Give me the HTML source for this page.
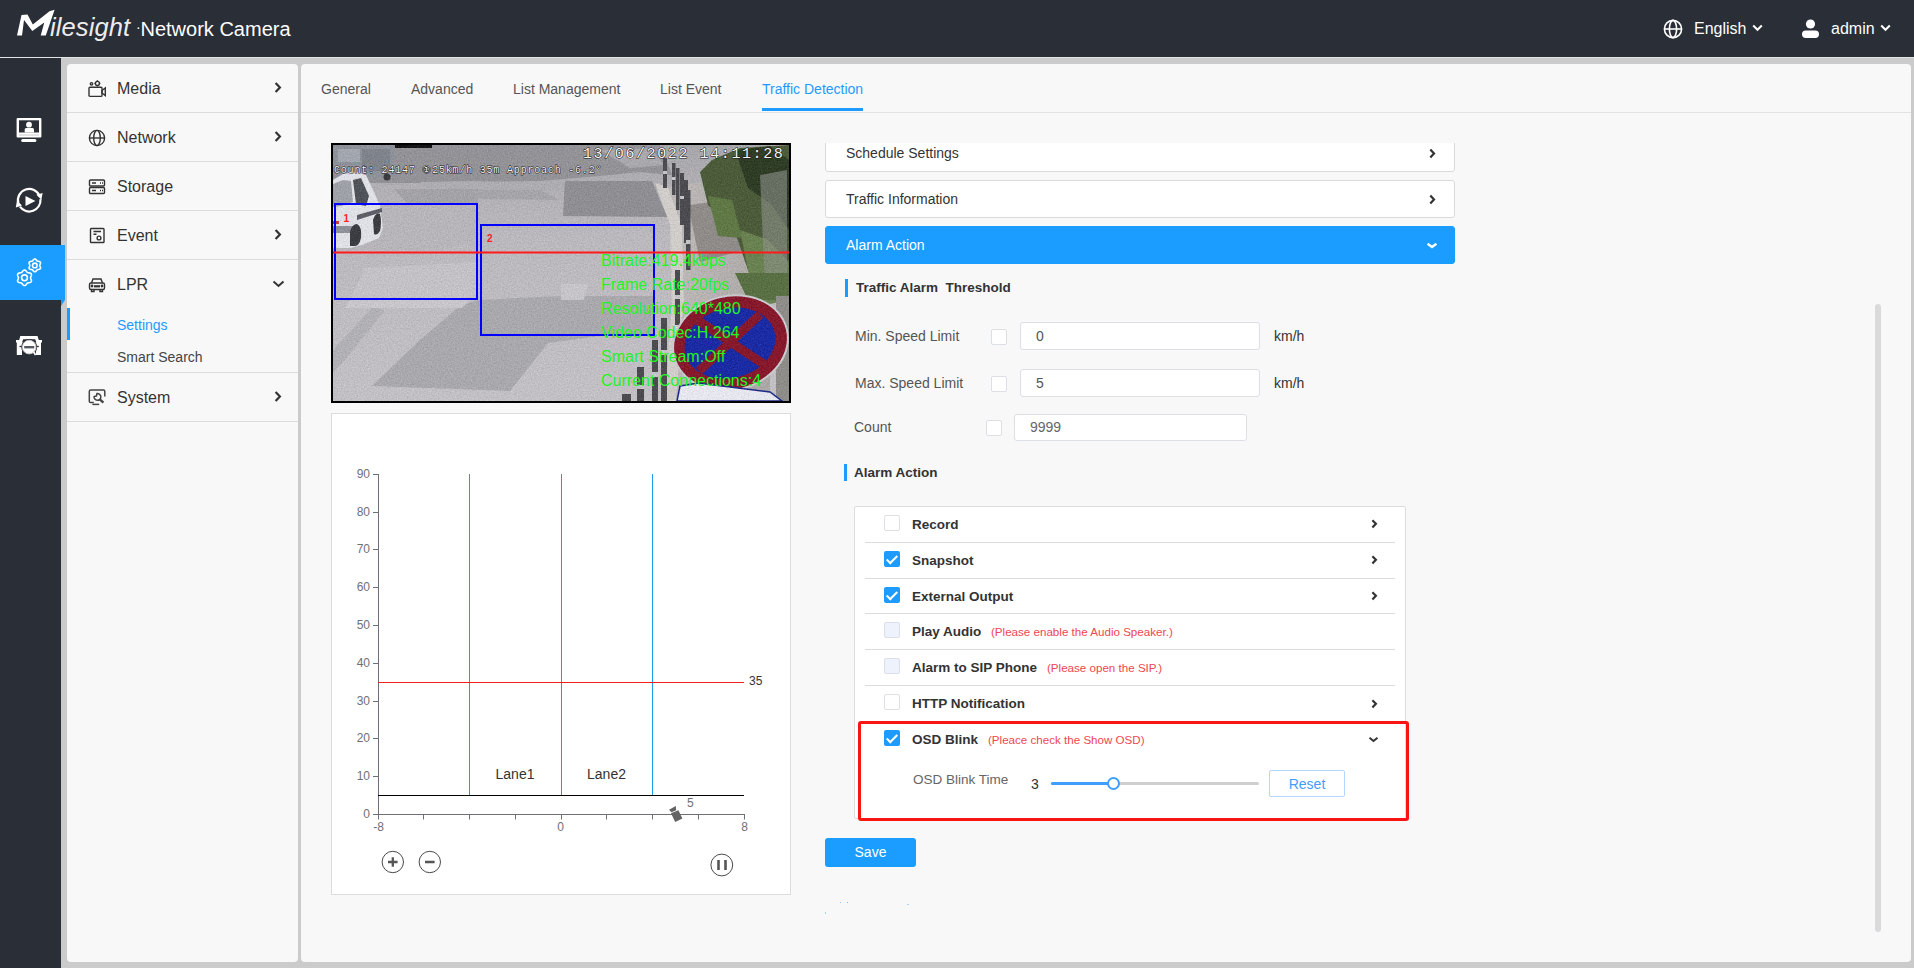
<!DOCTYPE html>
<html><head><meta charset="utf-8">
<style>
*{box-sizing:border-box;margin:0;padding:0}
html,body{width:1914px;height:968px;overflow:hidden;background:#cbcbcb;font-family:"Liberation Sans",sans-serif;}
.abs{position:absolute}
#hdr{left:0;top:0;width:1914px;height:57px;background:#2a2e37;color:#fff}
#lbar{left:0;top:58px;width:61px;height:910px;background:#2a2e37}
#side{left:67px;top:64px;width:231px;height:898px;background:#f8f8f8;border-radius:4px}
#main{left:301px;top:64px;width:1610px;height:898px;background:#f8f8f8;border-radius:4px}
.sep{position:absolute;left:67px;width:231px;height:1px;background:#dcdcdc}
.mt{position:absolute;left:117px;font-size:16px;color:#333;line-height:18px;white-space:nowrap}
.st{position:absolute;left:117px;font-size:14px;color:#444;line-height:16px;white-space:nowrap}
.tab{position:absolute;top:81px;font-size:14px;color:#555;line-height:16px;white-space:nowrap}
.acc{position:absolute;left:825px;width:630px;height:38px;background:#fff;border:1px solid #dadada;border-radius:3px}
.acc .t{position:absolute;left:20px;top:10px;font-size:14px;color:#333;line-height:16px}
.lbl{position:absolute;font-size:14px;color:#555;line-height:16px;white-space:nowrap}
.cb{position:absolute;width:16px;height:16px;border:1px solid #dcdfe6;border-radius:2px;background:#fff}
.inp{position:absolute;height:28px;border:1px solid #dcdfe6;border-radius:3px;background:#fff;font-size:14px;color:#555;line-height:26px;padding-left:15px}
.sec{position:absolute;font-size:13.5px;font-weight:bold;color:#333;line-height:16px;white-space:nowrap}
.bar{position:absolute;width:3px;background:#1e9bff}
.row{position:absolute;left:865px;width:530px;height:1px;background:#dcdcdc}
.rl{position:absolute;left:912px;font-size:13.5px;font-weight:bold;color:#333;line-height:16px;white-space:nowrap}
.rc{position:absolute;left:884px;width:16px;height:16px;border-radius:2px}
.rc.on{background:#1e9bff}
.rc.on::after{content:"";position:absolute;left:5px;top:1.5px;width:4px;height:9px;border:solid #fff;border-width:0 2px 2px 0;transform:rotate(45deg)}
.rc.off{background:#fff;border:1px solid #dcdfe6}
.rc.dis{background:#edf2fc;border:1px solid #dcdfe6}
.warn{position:absolute;font-size:11.6px;color:#f0464f;line-height:14px;white-space:nowrap}
</style></head><body>
<div id="hdr" class="abs">
  <svg class="abs" style="left:0;top:0" width="60" height="45" viewBox="0 0 60 45">
    <polygon fill="#fff" points="17,35.4 21.5,15 27.5,14.5 32.8,24.5 49.5,11.2 54.6,9.8 45.8,35.4 40.7,35.4 44.3,22.5 32.3,31 24,20 22,35.4"/>
  </svg>
  <div class="abs" style="left:50px;top:11.5px;font-size:25.5px;font-style:italic;line-height:30px;letter-spacing:0.1px;color:#ececec">ilesight</div>
  <div class="abs" style="left:136px;top:19px;font-size:14px;line-height:16px;color:#fff">·</div><div class="abs" style="left:140.5px;top:18px;font-size:20px;line-height:22px;color:#fff;white-space:nowrap">Network Camera</div>
  <svg class="abs" style="left:1663px;top:19px" width="20" height="20" viewBox="0 0 20 20" fill="none" stroke="#fff" stroke-width="1.6">
    <circle cx="10" cy="10" r="8.6"/><ellipse cx="10" cy="10" rx="3.6" ry="8.6"/><line x1="1.4" y1="10" x2="18.6" y2="10"/>
  </svg>
  <div class="abs" style="left:1694px;top:20px;font-size:16px;line-height:18px;color:#fff">English</div>
  <svg class="abs" style="left:1752px;top:24px" width="11" height="8" viewBox="0 0 11 8" fill="none" stroke="#fff" stroke-width="2"><polyline points="1.2,1.5 5.5,5.8 9.8,1.5"/></svg>
  <svg class="abs" style="left:1801px;top:19px" width="19" height="20" viewBox="0 0 19 20" fill="#fff">
    <circle cx="9.5" cy="5" r="4.6"/><rect x="1" y="11.5" width="17" height="7.5" rx="3.7"/>
  </svg>
  <div class="abs" style="left:1831px;top:20px;font-size:16px;line-height:18px;color:#fff">admin</div>
  <svg class="abs" style="left:1880px;top:24px" width="11" height="8" viewBox="0 0 11 8" fill="none" stroke="#fff" stroke-width="2"><polyline points="1.2,1.5 5.5,5.8 9.8,1.5"/></svg>
</div>
<div id="lbar" class="abs"></div>
<div class="abs" style="left:0;top:57px;width:1914px;height:1px;background:#e4e4e4"></div>
<div class="abs" style="left:0;top:245px;width:65px;height:55px;background:#1a9dff"></div>
<svg class="abs" style="left:61px;top:300px" width="4" height="6" viewBox="0 0 4 6"><polygon points="0,0 4,0 0,6" fill="#1a9dff"/></svg>
<!-- left bar icons -->
<svg class="abs" style="left:0;top:100px" width="61" height="270" viewBox="0 100 61 270">
  <rect x="16.6" y="117.9" width="24.8" height="19.6" rx="1" fill="#fff"/>
  <rect x="19" y="120.3" width="20" height="12.2" fill="#2a2e37"/>
  <line x1="19" y1="135" x2="39" y2="135" stroke="#b8b9bd" stroke-width="0.8"/>
  <circle cx="29" cy="124.7" r="2.9" fill="#fff"/>
  <path d="M24.7,132.5 V129.5 Q24.7,128 26.2,128 H32.5 Q34,128 34,129.5 V132.5 Z" fill="#fff"/>
  <rect x="21.2" y="138.9" width="15.2" height="3.1" rx="1.5" fill="#fff"/>
  <g fill="none" stroke="#fff" stroke-width="2.2">
    <path d="M18.29,203.12 A11.3,11.3 0 0 1 39.68,195.97"/>
    <path d="M40.46,199.22 A11.3,11.3 0 0 1 19.94,206.68"/>
  </g>
  <polygon points="36.4,194.8 42.6,193.0 41.4,199.8" fill="#fff"/>
  <polygon points="22.0,205.6 15.8,207.4 17.0,200.6" fill="#fff"/>
  <polygon points="25.5,195.9 25.5,206 35.4,201" fill="#fff"/>
  <g fill="none" stroke="#fff" stroke-width="1.6" stroke-linejoin="round">
    <path d="M30.55,277.80 L30.60,277.40 L30.75,276.98 L30.95,276.52 L31.16,276.01 L31.34,275.48 L31.43,274.93 L31.39,274.40 L31.21,273.93 L30.89,273.53 L30.45,273.23 L29.93,273.04 L29.38,272.92 L28.84,272.86 L28.33,272.80 L27.90,272.72 L27.53,272.56 L27.20,272.32 L26.91,271.98 L26.61,271.57 L26.29,271.14 L25.91,270.71 L25.48,270.36 L25.00,270.13 L24.50,270.05 L24.00,270.13 L23.52,270.36 L23.09,270.71 L22.71,271.14 L22.39,271.57 L22.09,271.98 L21.80,272.32 L21.48,272.56 L21.10,272.72 L20.67,272.80 L20.16,272.86 L19.62,272.92 L19.07,273.04 L18.55,273.23 L18.11,273.53 L17.79,273.93 L17.61,274.40 L17.57,274.93 L17.66,275.48 L17.84,276.01 L18.05,276.52 L18.25,276.98 L18.40,277.40 L18.45,277.80 L18.40,278.20 L18.25,278.62 L18.05,279.08 L17.84,279.59 L17.66,280.12 L17.57,280.67 L17.61,281.20 L17.79,281.68 L18.11,282.07 L18.55,282.37 L19.07,282.56 L19.62,282.68 L20.16,282.74 L20.67,282.80 L21.10,282.88 L21.47,283.04 L21.80,283.28 L22.09,283.62 L22.39,284.03 L22.71,284.46 L23.09,284.89 L23.52,285.24 L24.00,285.47 L24.50,285.55 L25.00,285.47 L25.48,285.24 L25.91,284.89 L26.29,284.46 L26.61,284.03 L26.91,283.62 L27.20,283.28 L27.53,283.04 L27.90,282.88 L28.33,282.80 L28.84,282.74 L29.38,282.68 L29.93,282.56 L30.45,282.37 L30.89,282.07 L31.21,281.68 L31.39,281.20 L31.43,280.67 L31.34,280.12 L31.16,279.59 L30.95,279.08 L30.75,278.62 L30.60,278.20 Z"/><circle cx="24.5" cy="277.8" r="2.9"/>
    <path d="M39.80,265.40 L39.84,265.07 L39.96,264.72 L40.13,264.34 L40.31,263.92 L40.45,263.48 L40.52,263.03 L40.49,262.59 L40.34,262.20 L40.08,261.87 L39.71,261.63 L39.29,261.47 L38.83,261.37 L38.38,261.32 L37.97,261.27 L37.61,261.20 L37.30,261.07 L37.04,260.87 L36.79,260.59 L36.55,260.26 L36.28,259.89 L35.96,259.55 L35.61,259.26 L35.22,259.07 L34.80,259.00 L34.38,259.07 L33.99,259.26 L33.64,259.55 L33.32,259.89 L33.05,260.26 L32.81,260.59 L32.56,260.87 L32.30,261.07 L31.99,261.20 L31.63,261.27 L31.22,261.32 L30.77,261.37 L30.31,261.47 L29.89,261.63 L29.52,261.87 L29.26,262.20 L29.11,262.59 L29.08,263.03 L29.15,263.48 L29.29,263.92 L29.47,264.34 L29.64,264.72 L29.76,265.07 L29.80,265.40 L29.76,265.73 L29.64,266.08 L29.47,266.46 L29.29,266.88 L29.15,267.32 L29.08,267.77 L29.11,268.21 L29.26,268.60 L29.52,268.93 L29.89,269.17 L30.31,269.33 L30.77,269.43 L31.22,269.48 L31.63,269.53 L31.99,269.60 L32.30,269.73 L32.56,269.93 L32.81,270.21 L33.05,270.54 L33.32,270.91 L33.64,271.25 L33.99,271.54 L34.38,271.73 L34.80,271.80 L35.22,271.73 L35.61,271.54 L35.96,271.25 L36.28,270.91 L36.55,270.54 L36.79,270.21 L37.04,269.93 L37.30,269.73 L37.61,269.60 L37.97,269.53 L38.38,269.48 L38.83,269.43 L39.29,269.33 L39.71,269.17 L40.08,268.93 L40.34,268.60 L40.49,268.21 L40.52,267.77 L40.45,267.32 L40.31,266.88 L40.13,266.46 L39.96,266.08 L39.84,265.73 Z"/><circle cx="34.8" cy="265.4" r="2.3"/>
  </g>
  <path d="M16,340 H19.2 L20.3,335.9 H37.5 L38.8,340 H42 V342.5 H41 V354.9 H36 V351 H22 V354.9 H16.8 V342.5 H16 Z" fill="#fff"/>
  <polygon points="22,342.5 23.2,339.2 35.2,339.2 36.4,342.5" fill="#2a2e37"/>
  <circle cx="29.2" cy="347.1" r="8" fill="#2a2e37"/>
  <circle cx="29.2" cy="347.1" r="6.8" fill="#fff"/>
  <circle cx="29.2" cy="347.1" r="6.8" fill="none" stroke="#c8c8cc" stroke-width="0.9"/>
  <line x1="33.6" y1="352" x2="35.6" y2="355" stroke="#fff" stroke-width="1.8"/>
  <rect x="24.2" y="346" width="10" height="2.4" fill="#555a62"/>
  <rect x="19.5" y="345.8" width="2" height="1.3" fill="#2a2e37"/><rect x="36.8" y="345.8" width="2" height="1.3" fill="#2a2e37"/>
</svg>
<div id="side" class="abs"></div>
<div class="sep" style="top:112px"></div>
<div class="sep" style="top:161px"></div>
<div class="sep" style="top:210px"></div>
<div class="sep" style="top:259px"></div>
<div class="sep" style="top:372px"></div>
<div class="sep" style="top:421px"></div>
<div class="mt" style="top:80px">Media</div>
<div class="mt" style="top:129px">Network</div>
<div class="mt" style="top:178px">Storage</div>
<div class="mt" style="top:227px">Event</div>
<div class="mt" style="top:276px">LPR</div>
<div class="mt" style="top:389px">System</div>
<div class="st" style="top:317px;color:#1e9bff">Settings</div>
<div class="st" style="top:349px">Smart Search</div>
<div class="abs" style="left:67px;top:308px;width:3px;height:32px;background:#1e9bff"></div>
<!-- side chevrons -->
<svg class="abs" style="left:274px;top:81px" width="8" height="13" viewBox="0 0 8 13" fill="none" stroke="#333" stroke-width="2.2"><polyline points="1.6,2 5.9,6.5 1.6,11"/></svg>
<svg class="abs" style="left:274px;top:130px" width="8" height="13" viewBox="0 0 8 13" fill="none" stroke="#333" stroke-width="2.2"><polyline points="1.6,2 5.9,6.5 1.6,11"/></svg>
<svg class="abs" style="left:274px;top:228px" width="8" height="13" viewBox="0 0 8 13" fill="none" stroke="#333" stroke-width="2.2"><polyline points="1.6,2 5.9,6.5 1.6,11"/></svg>
<svg class="abs" style="left:272px;top:280px" width="13" height="8" viewBox="0 0 13 8" fill="none" stroke="#333" stroke-width="2"><polyline points="1.5,1.5 6.5,6 11.5,1.5"/></svg>
<svg class="abs" style="left:274px;top:390px" width="8" height="13" viewBox="0 0 8 13" fill="none" stroke="#333" stroke-width="2.2"><polyline points="1.6,2 5.9,6.5 1.6,11"/></svg>
<!-- side icons -->
<svg class="abs" style="left:87px;top:79px" width="20" height="20" viewBox="0 0 20 20" fill="none" stroke="#333" stroke-width="1.4">
  <rect x="2" y="8.2" width="13" height="9.2" rx="1"/><polygon points="15,11.5 18.3,9 18.3,16.5 15,14"/>
  <circle cx="4.5" cy="4.8" r="1.2"/><circle cx="10.4" cy="4.4" r="2"/>
  <path d="M10.4,1.3 v1 M10.4,6.4 v1 M7.4,4.4 h1 M12.4,4.4 h1" />
</svg>
<svg class="abs" style="left:87px;top:128px" width="20" height="20" viewBox="0 0 20 20" fill="none" stroke="#333" stroke-width="1.4">
  <circle cx="10" cy="10" r="7.6"/><ellipse cx="10" cy="10" rx="3.3" ry="7.6"/><line x1="2.4" y1="10" x2="17.6" y2="10"/>
</svg>
<svg class="abs" style="left:87px;top:177px" width="20" height="20" viewBox="0 0 20 20" fill="none" stroke="#333" stroke-width="1.4">
  <rect x="2.5" y="3" width="15" height="6" rx="1"/><rect x="2.5" y="10.5" width="15" height="6" rx="1"/>
  <path d="M5,6 h4 M13,6 h1 M15,6 h1 M5,13.5 h4 M13,13.5 h1 M15,13.5 h1"/>
</svg>
<svg class="abs" style="left:87px;top:226px" width="20" height="20" viewBox="0 0 20 20" fill="none" stroke="#333" stroke-width="1.4">
  <rect x="3.5" y="2.5" width="13.5" height="14" rx="0.8"/><path d="M6.5,5.5 h7.5 M6.5,8.3 h3"/><circle cx="12" cy="12" r="1.9"/>
</svg>
<svg class="abs" style="left:87px;top:275px" width="20" height="20" viewBox="0 0 20 20" fill="none" stroke="#333" stroke-width="1.4">
  <path d="M4.5,8 L6,4 H14 L15.5,8"/><rect x="2.5" y="8" width="15" height="6.5" rx="1.5"/>
  <path d="M4.5,14.5 v2 h2.5 v-2 M13,14.5 v2 h2.5 v-2"/><path d="M7,11.3 h6" stroke-width="2.2"/>
  <circle cx="5" cy="11" r="0.7"/><circle cx="15" cy="11" r="0.7"/>
</svg>
<svg class="abs" style="left:87px;top:388px" width="20" height="20" viewBox="0 0 20 20" fill="none" stroke="#444" stroke-width="1.5">
  <path d="M6.8,14.5 H3.6 Q2.3,14.5 2.3,13.2 V3.4 Q2.3,2.1 3.6,2.1 H16.5 Q17.8,2.1 17.8,3.4 V8.5"/><path d="M5.4,16.4 H12.2"/>
  <path d="M9.9,5.6 A3.4,3.4 0 1 1 7.1,8.4 L9.5,8 Z" stroke-width="1.5" stroke-linejoin="round"/>
  <path d="M12.8,11.4 L16.4,14.6" stroke-width="2.4"/>
</svg>
<div id="main" class="abs"></div>
<!-- tabs -->
<div class="abs" style="left:301px;top:112px;width:1610px;height:1px;background:#e2e2e2"></div>
<div class="tab" style="left:321px">General</div>
<div class="tab" style="left:411px">Advanced</div>
<div class="tab" style="left:513px">List Management</div>
<div class="tab" style="left:660px">List Event</div>
<div class="tab" style="left:762px;color:#1e9bff">Traffic Detection</div>
<div class="abs" style="left:762px;top:108px;width:101px;height:3px;background:#1e9bff"></div>
<!-- scrollbar -->
<div class="abs" style="left:1875px;top:304px;width:6px;height:628px;border-radius:3px;background:#d9dadc"></div>
<!-- right column -->
<div class="abs" style="left:815px;top:143px;width:660px;height:700px;overflow:hidden">
  <div class="acc" style="left:10px;top:-9px"><div class="t">Schedule Settings</div></div>
</div>
<div class="acc" style="top:180px"><div class="t">Traffic Information</div></div>
<div class="acc" style="top:226px;background:#1a9dff;border-color:#1a9dff"><div class="t" style="color:#fff">Alarm Action</div></div>
<svg class="abs" style="left:1429px;top:148px" width="7" height="11" viewBox="0 0 7 11" fill="none" stroke="#333" stroke-width="2.2"><polyline points="1.3,1.5 5,5.5 1.3,9.5"/></svg>
<svg class="abs" style="left:1429px;top:194px" width="7" height="11" viewBox="0 0 7 11" fill="none" stroke="#333" stroke-width="2.2"><polyline points="1.3,1.5 5,5.5 1.3,9.5"/></svg>
<svg class="abs" style="left:1426px;top:242px" width="12" height="7" viewBox="0 0 12 7" fill="none" stroke="#fff" stroke-width="2.4"><polyline points="1.6,1.8 6,5 10.4,1.8"/></svg>

<div class="bar" style="left:845px;top:279px;height:18px"></div>
<div class="sec" style="left:856px;top:280px">Traffic Alarm&nbsp; Threshold</div>
<div class="lbl" style="left:855px;top:328px">Min. Speed Limit</div>
<div class="cb" style="left:991px;top:329px"></div>
<div class="inp" style="left:1020px;top:322px;width:240px">0</div>
<div class="lbl" style="left:1274px;top:328px;color:#333">km/h</div>
<div class="lbl" style="left:855px;top:375px">Max. Speed Limit</div>
<div class="cb" style="left:991px;top:376px"></div>
<div class="inp" style="left:1020px;top:369px;width:240px">5</div>
<div class="lbl" style="left:1274px;top:375px;color:#333">km/h</div>
<div class="lbl" style="left:854px;top:419px">Count</div>
<div class="cb" style="left:986px;top:420px"></div>
<div class="inp" style="left:1014px;top:414px;width:233px;height:27px;line-height:25px;color:#666">9999</div>
<div class="bar" style="left:844px;top:464px;height:17px"></div>
<div class="sec" style="left:854px;top:465px">Alarm Action</div>

<!-- list -->
<div class="abs" style="left:854px;top:506px;width:552px;height:313px;background:#fff;border:1px solid #dcdcdc;border-radius:2px"></div>
<div class="row" style="top:542px"></div>
<div class="row" style="top:578px"></div>
<div class="row" style="top:613px"></div>
<div class="row" style="top:649px"></div>
<div class="row" style="top:685px"></div>
<div class="rc off" style="top:515px"></div><div class="rl" style="top:517px">Record</div>
<div class="rc on" style="top:551px"></div><div class="rl" style="top:553px">Snapshot</div>
<div class="rc on" style="top:587px"></div><div class="rl" style="top:589px">External Output</div>
<div class="rc dis" style="top:622px"></div><div class="rl" style="top:624px">Play Audio</div><div class="warn" style="left:991px;top:625px">(Please enable the Audio Speaker.)</div>
<div class="rc dis" style="top:658px"></div><div class="rl" style="top:660px">Alarm to SIP Phone</div><div class="warn" style="left:1047px;top:661px">(Please open the SIP.)</div>
<div class="rc off" style="top:694px"></div><div class="rl" style="top:696px">HTTP Notification</div>
<div class="rc on" style="top:730px"></div><div class="rl" style="top:732px">OSD Blink</div><div class="warn" style="left:988px;top:733px">(Pleace check the Show OSD)</div>
<svg class="abs" style="left:1371px;top:519px" width="7" height="10" viewBox="0 0 7 10" fill="none" stroke="#333" stroke-width="2.2"><polyline points="1.4,1.2 4.9,4.8 1.4,8.4"/></svg>
<svg class="abs" style="left:1371px;top:555px" width="7" height="10" viewBox="0 0 7 10" fill="none" stroke="#333" stroke-width="2.2"><polyline points="1.4,1.2 4.9,4.8 1.4,8.4"/></svg>
<svg class="abs" style="left:1371px;top:591px" width="7" height="10" viewBox="0 0 7 10" fill="none" stroke="#333" stroke-width="2.2"><polyline points="1.4,1.2 4.9,4.8 1.4,8.4"/></svg>
<svg class="abs" style="left:1371px;top:699px" width="7" height="10" viewBox="0 0 7 10" fill="none" stroke="#333" stroke-width="2.2"><polyline points="1.4,1.2 4.9,4.8 1.4,8.4"/></svg>
<svg class="abs" style="left:1368px;top:736px" width="11" height="7" viewBox="0 0 11 7" fill="none" stroke="#333" stroke-width="2"><polyline points="1.5,1.8 5.5,5 9.5,1.8"/></svg>
<div class="lbl" style="left:913px;top:772px;color:#666;font-size:13.5px">OSD Blink Time</div>
<div class="lbl" style="left:1031px;top:776px;color:#333">3</div>
<div class="abs" style="left:1051px;top:782px;width:208px;height:3px;background:#cfcfcf;border-radius:2px"></div>
<div class="abs" style="left:1051px;top:782px;width:62px;height:3px;background:#409eff;border-radius:2px"></div>
<div class="abs" style="left:1107px;top:777px;width:13px;height:13px;border:2px solid #409eff;border-radius:50%;background:#fff"></div>
<div class="abs" style="left:1269px;top:770px;width:76px;height:27px;border:1px solid #b3d8ff;border-radius:2px;background:#fff;color:#409eff;font-size:14px;line-height:26px;text-align:center">Reset</div>
<div class="abs" style="left:858px;top:721px;width:551px;height:100px;border:3px solid #fa1414;border-radius:3px"></div>
<div class="abs" style="left:825px;top:838px;width:91px;height:29px;background:#1a9dff;border-radius:3px;color:#fff;font-size:14px;line-height:29px;text-align:center">Save</div>
<div class="abs" style="left:840px;top:902px;width:1px;height:1px;background:#8fc8ff"></div>
<div class="abs" style="left:847px;top:902px;width:1px;height:1px;background:#6fb8ff"></div>
<div class="abs" style="left:907px;top:904px;width:2px;height:1px;background:#a8d4ff"></div>
<div class="abs" style="left:825px;top:912px;width:1px;height:2px;background:#9ccfff"></div>
<div class="abs" style="left:331px;top:143px;width:460px;height:260px;background:#000"></div>
<svg class="abs" style="left:333px;top:145px" width="456" height="256" viewBox="333 145 456 256">
  <defs>
    <linearGradient id="rg" x1="0" y1="0" x2="0" y2="1">
      <stop offset="0" stop-color="#a7a6ab"/><stop offset="0.35" stop-color="#bab8bd"/><stop offset="1" stop-color="#c2c0c5"/>
    </linearGradient>
    <linearGradient id="sw" x1="0" y1="0" x2="1" y2="0">
      <stop offset="0" stop-color="#bdb9b8"/><stop offset="1" stop-color="#aaa7a5"/>
    </linearGradient>
    <filter id="tex" x="0" y="0" width="100%" height="100%" color-interpolation-filters="sRGB">
      <feTurbulence type="fractalNoise" baseFrequency="0.7" numOctaves="2" seed="5" result="n"/>
      <feColorMatrix in="n" type="matrix" values="0.6 0.4 0 0 0  0.6 0.4 0 0 0  0.6 0.4 0 0 0  0 0 0 0 1" result="g"/>
      <feComposite in="SourceGraphic" in2="g" operator="arithmetic" k1="0" k2="1" k3="0.22" k4="-0.11"/>
    </filter>
  </defs>
  <g filter="url(#tex)">
  <rect x="333" y="145" width="456" height="256" fill="url(#rg)"/>
  <!-- upper dark asphalt band -->
  <polygon points="333,145 660,145 672,175 640,172 600,176 540,181 470,182 420,183 333,183" fill="#939297"/>
  <polygon points="420,182 470,181 540,183 600,180 655,182 660,190 560,190 470,192 430,190" fill="#adacb0"/>
  <polygon points="565,181 652,181 662,205 668,217 563,216" fill="#8f8e92"/>
  <polygon points="394,189 478,189 478,218 420,218" fill="#a3a2a6"/><polygon points="470,190 540,190 560,200 480,199" fill="#a5a4a8"/>
  <polygon points="600,150 650,148 665,165 630,168" fill="#a9a8ac"/>
  <!-- mid road lower patches -->
  <polygon points="333,204 420,204 478,205 478,240 440,250 333,250" fill="#b7b5ba"/>
  <polygon points="478,300 561,296 655,296 655,336 600,336 548,343 510,391 372,386 420,340 460,306" fill="#a9a8ad"/>
  <polygon points="365,268 478,262 478,299 350,299" fill="#c3c1c6"/>
  <polygon points="350,300 470,300 462,308 345,308" fill="#c8c6cb"/>
  <polygon points="561,284 588,284 584,300 561,300" fill="#c6c4c9"/>
  <polygon points="333,350 372,308 385,310 345,360 333,372" fill="#b1b0b4"/>
  <!-- truck top-left -->
  <rect x="333" y="145" width="61" height="32" fill="#8d919a"/>
  <rect x="338" y="149" width="22" height="13" fill="#a2a6af"/>
  <rect x="362" y="149" width="28" height="22" fill="#7f838c"/>
  <rect x="395" y="145" width="37" height="3" fill="#151515"/>
  <circle cx="387" cy="177" r="3.5" fill="#3a3a3e"/>
  <!-- car -->
  <path d="M333,180 L343,174 L357,172 L366,175 L374,192 L380,206 L383,228 L379,238 L362,245 L350,248 L333,248 Z" fill="#dfe0e5"/>
  <path d="M333,184 L343,180 L351,181 L353,202 L341,206 L333,207 Z" fill="#9ea1a8"/>
  <path d="M353,180 L361,178 L369,196 L366,206 L356,204 Z" fill="#50535a"/>
  <path d="M333,226 L353,226 L353,233 L333,233 Z" fill="#8e9198"/>
  <path d="M357,215 L382,208 L382,212 L357,220 Z" fill="#5c5f68"/>
  <path d="M350,232 Q352,224 357,224 Q362,226 361,238 Q359,247 354,246 L350,246 Z" fill="#3c3d42"/>
  <path d="M373,220 Q376,211 380,214 Q382,222 380,231 Q377,236 374,234 Z" fill="#3c3d42"/>
  <rect x="333" y="221" width="6" height="3" fill="#b43"/>
  <!-- curb and sidewalk -->
  <polygon points="655,183 668,187 682,225 684,300 676,401 665,401 672,300 670,225" fill="#cfccc9"/>
  <polygon points="668,187 720,180 745,230 770,330 770,401 676,401 684,300 682,225" fill="url(#sw)"/>
  <polygon points="688,205 730,200 745,250 700,262" fill="#8e8b88"/>
  <!-- bollards -->
  <g fill="#4b4b50">
    <rect x="663" y="158" width="4" height="30"/>
    <rect x="672" y="163" width="3.5" height="32"/>
    <rect x="676" y="168" width="3.5" height="42"/>
    <rect x="680" y="173" width="4" height="52"/>
    <rect x="684" y="180" width="4" height="63"/>
    <rect x="686" y="190" width="4.5" height="80"/>
    <rect x="675" y="270" width="5" height="55"/>
    <rect x="661" y="318" width="6" height="83"/>
    <rect x="652" y="340" width="6" height="61"/>
    <rect x="637" y="367" width="7" height="34"/>
    <rect x="622" y="394" width="9" height="7"/>
  </g>
  <g fill="#c4c4c6">
    <rect x="663" y="171" width="4" height="3"/><rect x="672" y="177" width="3.5" height="3"/><rect x="680" y="196" width="4" height="3"/>
    <rect x="686" y="240" width="4.5" height="4"/><rect x="675" y="295" width="5" height="4"/><rect x="661" y="350" width="6" height="5"/><rect x="652" y="372" width="6" height="5"/><rect x="637" y="385" width="7" height="4"/>
  </g>
  <!-- greenery -->
  <polygon points="700,172 712,160 740,148 789,145 789,300 762,300 748,270 735,232 708,205" fill="#4c5c3b"/>
  <polygon points="735,150 770,146 789,160 789,230 772,205 748,188" fill="#2f3d26"/>
  <polygon points="740,230 768,240 789,262 789,300 765,305 750,280" fill="#6a8251"/>
  <polygon points="708,196 732,200 742,238 718,236" fill="#5f7845"/>
  <polygon points="760,175 787,170 787,300 765,290" fill="#8d908a" opacity="0.6"/>
  <polygon points="735,273 789,273 789,300 748,300" fill="#587043"/>
  <!-- sign -->
  <rect x="776" y="296" width="13" height="105" fill="#8f8d89"/>
  <g transform="rotate(-14 730.5 343)">
    <ellipse cx="730.5" cy="343" rx="59" ry="48" fill="#c9c9ce"/>
    <ellipse cx="730.5" cy="343" rx="57" ry="46" fill="#87192d"/>
    <ellipse cx="730" cy="343" rx="46" ry="35" fill="#1b2ba3"/>
  </g>
  <line x1="695" y1="318.5" x2="768" y2="367" stroke="#87192d" stroke-width="9"/>
  <line x1="760" y1="314.5" x2="699" y2="371" stroke="#87192d" stroke-width="9"/>
  <polygon points="680,386 698,383 770,392 782,401 677,401" fill="#e6e6ee" stroke="#1b2a8a" stroke-width="1.5"/>
  </g>
  <!-- overlays -->
  <rect x="335" y="204" width="142" height="95" fill="none" stroke="#0000ff" stroke-width="2"/>
  <rect x="481" y="225" width="173" height="110" fill="none" stroke="#0000ff" stroke-width="2"/>
  <line x1="333" y1="252.5" x2="789" y2="252.5" stroke="#ff1a1a" stroke-width="2"/>
  <text x="343.5" y="222" font-family="Liberation Sans" font-weight="bold" font-size="10" fill="#ff2020">1</text>
  <text x="487" y="242" font-family="Liberation Sans" font-weight="bold" font-size="10" fill="#ff2020">2</text>
  <g font-family="Liberation Sans" font-size="16" fill="#22f522">
    <text x="601" y="265.5">Bitrate:419.4kbps</text>
    <text x="601" y="289.5">Frame  Rate:20fps</text>
    <text x="601" y="313.5">Resolution:640*480</text>
    <text x="601" y="337.5">Video Codec:H.264</text>
    <text x="601" y="361.5">Smart Stream:Off</text>
    <text x="601" y="385.5">Current Connections:4</text>
  </g>
  <g font-family="Liberation Mono" fill="#f4f4f4" stroke="#151515" stroke-width="1" paint-order="stroke">
    <text x="583" y="158" font-size="15" letter-spacing="1.6">13/06/2022 14:11:28</text>
    <text x="334" y="173" font-size="10" letter-spacing="0.8">Count: 24147  ①25km/h 35m Approach -6.2°</text>
  </g>
</svg>
<div class="abs" style="left:331px;top:413px;width:460px;height:482px;background:#fff;border:1px solid #dcdcdc"></div>
<svg class="abs" style="left:331px;top:413px" width="460" height="482" viewBox="331 413 460 482">
  <g stroke="#6e7079" stroke-width="1" fill="none">
    <line x1="378.5" y1="474" x2="378.5" y2="815"/>
    <line x1="378" y1="814.5" x2="745" y2="814.5"/>
    <path d="M373,814.5 h5.5 M373,776.5 h5.5 M373,738.5 h5.5 M373,701.5 h5.5 M373,663.5 h5.5 M373,625.5 h5.5 M373,587.5 h5.5 M373,549.5 h5.5 M373,512.5 h5.5 M373,474.5 h5.5"/>
    <path d="M378.5,814.5 v5 M423.5,814.5 v5 M469.5,814.5 v5 M515.5,814.5 v5 M561.5,814.5 v5 M606.5,814.5 v5 M652.5,814.5 v5 M698.5,814.5 v5 M744.5,814.5 v5"/>
  </g>
  <g font-family="Liberation Sans" font-size="12" fill="#6e7079" text-anchor="end">
    <text x="370" y="818.0">0</text><text x="370" y="780.0">10</text><text x="370" y="742.0">20</text><text x="370" y="705.0">30</text><text x="370" y="667.0">40</text><text x="370" y="629.0">50</text><text x="370" y="591.0">60</text><text x="370" y="553.0">70</text><text x="370" y="516.0">80</text><text x="370" y="478.0">90</text>
  </g>
  <g font-family="Liberation Sans" font-size="12" fill="#6e7079" text-anchor="middle">
    <text x="378.5" y="830.5">-8</text><text x="560.5" y="830.5">0</text><text x="744.5" y="830.5">8</text>
  </g>
  <g stroke="#1d9bf0" stroke-width="1">
    <line x1="469.5" y1="474" x2="469.5" y2="795"/>
    <line x1="561.5" y1="474" x2="561.5" y2="795"/>
    <line x1="652.5" y1="474" x2="652.5" y2="795"/>
  </g>
  <line x1="378" y1="682.5" x2="744" y2="682.5" stroke="#f51c1c" stroke-width="1"/>
  <text x="749" y="685" font-family="Liberation Sans" font-size="12" fill="#333">35</text>
  <line x1="378" y1="795.5" x2="744" y2="795.5" stroke="#000" stroke-width="1.2"/>
  <g font-family="Liberation Sans" font-size="14" fill="#333" text-anchor="middle">
    <text x="515" y="779">Lane1</text><text x="606.5" y="779">Lane2</text>
  </g>
  <text x="687" y="807" font-family="Liberation Sans" font-size="12" fill="#6e7079">5</text>
  <polygon fill="#646464" points="671,813.3 678.4,810.2 682.4,818.5 675.2,822"/><polygon fill="#646464" points="669,809.8 675.8,806 676.2,810.2 671.5,812.2"/>
  <g fill="none" stroke="#4a4a4a" stroke-width="1">
    <circle cx="392.8" cy="862" r="10.7"/><circle cx="429.8" cy="862" r="10.7"/><circle cx="721.8" cy="865" r="10.9"/>
  </g>
  <g stroke="#555" stroke-width="2.3">
    <path d="M388,862 h9.6 M392.8,857.2 v9.6 M425,862 h9.6"/>
  </g>
  <g stroke="#555" stroke-width="2.6">
    <path d="M718.5,860 v10 M725.5,860 v10"/>
  </g>
</svg>
</body></html>
